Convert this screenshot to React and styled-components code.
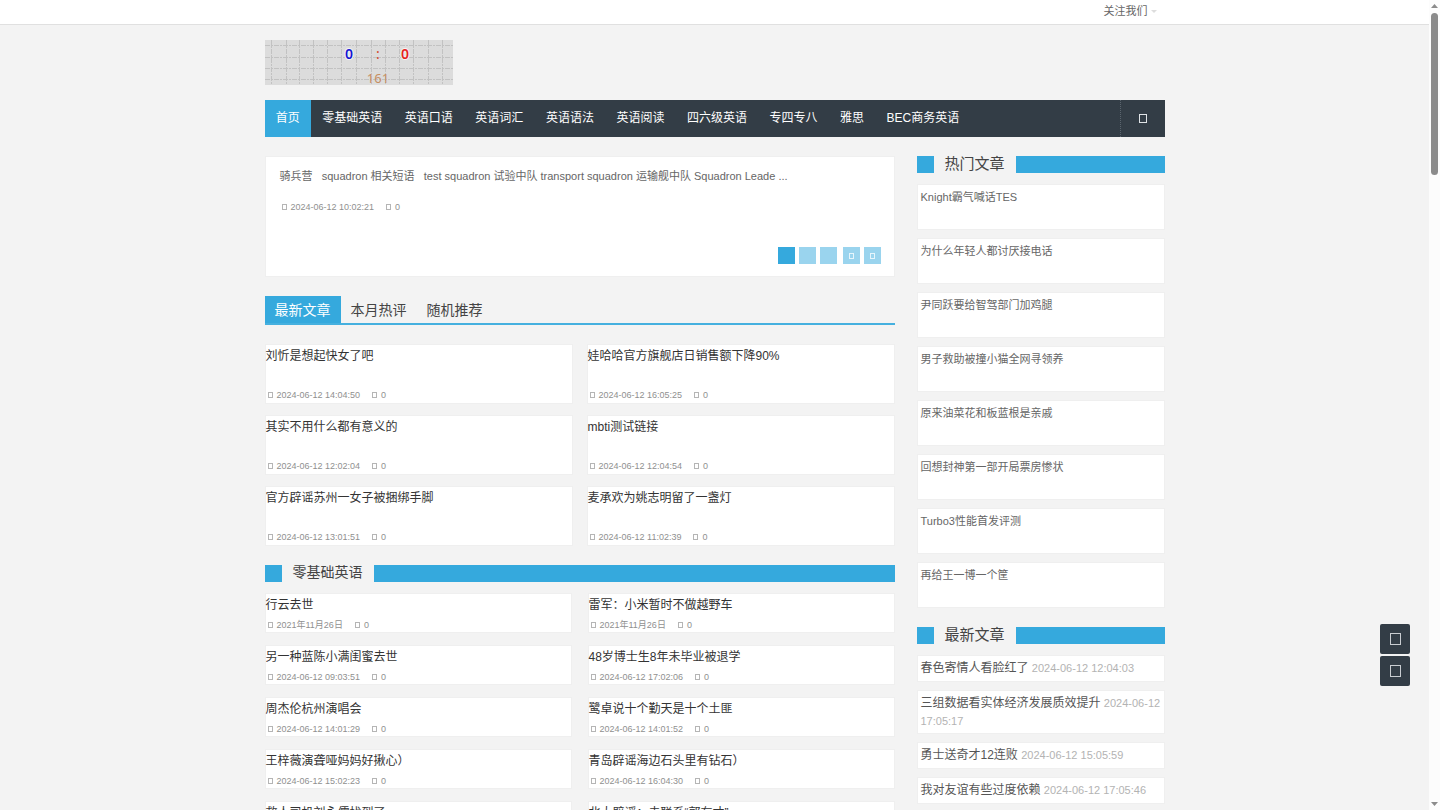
import styled, { createGlobalStyle } from "styled-components";

const navItems = [
  "首页",
  "零基础英语",
  "英语口语",
  "英语词汇",
  "英语语法",
  "英语阅读",
  "四六级英语",
  "专四专八",
  "雅思",
  "BEC商务英语",
];

const tabs = ["最新文章", "本月热评", "随机推荐"];

const latest = [
  { title: "刘忻是想起快女了吧", date: "2024-06-12 14:04:50" },
  { title: "娃哈哈官方旗舰店日销售额下降90%", date: "2024-06-12 16:05:25" },
  { title: "其实不用什么都有意义的", date: "2024-06-12 12:02:04" },
  { title: "mbti测试链接", date: "2024-06-12 12:04:54" },
  { title: "官方辟谣苏州一女子被捆绑手脚", date: "2024-06-12 13:01:51" },
  { title: "麦承欢为姚志明留了一盏灯", date: "2024-06-12 11:02:39" },
];

const basics = [
  { title: "行云去世", date: "2021年11月26日" },
  { title: "雷军：小米暂时不做越野车", date: "2021年11月26日" },
  { title: "另一种蓝陈小满闺蜜去世", date: "2024-06-12 09:03:51" },
  { title: "48岁博士生8年未毕业被退学", date: "2024-06-12 17:02:06" },
  { title: "周杰伦杭州演唱会", date: "2024-06-12 14:01:29" },
  { title: "鹭卓说十个勤天是十个土匪", date: "2024-06-12 14:01:52" },
  { title: "王梓薇演聋哑妈妈好揪心）", date: "2024-06-12 15:02:23" },
  { title: "青岛辟谣海边石头里有钻石）", date: "2024-06-12 16:04:30" },
  { title: "救人司机刘永儒找到了", date: "2024-06-12 10:03:12" },
  { title: "北大辟谣：未联系“郭有才”", date: "2024-06-12 15:01:47" },
];

const hot = [
  "Knight霸气喊话TES",
  "为什么年轻人都讨厌接电话",
  "尹同跃要给智驾部门加鸡腿",
  "男子救助被撞小猫全网寻领养",
  "原来油菜花和板蓝根是亲戚",
  "回想封神第一部开局票房惨状",
  "Turbo3性能首发评测",
  "再给王一博一个筐",
];

const recent = [
  { title: "春色寄情人看脸红了", date: "2024-06-12 12:04:03" },
  { title: "三组数据看实体经济发展质效提升", date: "2024-06-12 17:05:17" },
  { title: "勇士送奇才12连败", date: "2024-06-12 15:05:59" },
  { title: "我对友谊有些过度依赖", date: "2024-06-12 17:05:46" },
];

const Meta = ({ date }) => (
  <MetaStyle>
    <Glyph />
    <span>{date}</span>
    <Glyph />
    <span>0</span>
  </MetaStyle>
);

const Logo = () => (
  <svg width="188" height="45" role="img" aria-label="0 : 0">
    <rect width="188" height="45" fill="#dcdcdc" />
    <g stroke="#c2c2c2" strokeDasharray="5 1 2 1">
      {[7, 22, 35, 49, 63, 77, 92, 107, 121, 135, 149, 164, 178].map((x) => (
        <line key={x} x1={x - 0.5} x2={x - 0.5} y1="0" y2="45" />
      ))}
      {[6, 18, 29, 40].map((y) => (
        <line key={y} x1="0" x2="188" y1={y - 0.5} y2={y - 0.5} />
      ))}
    </g>
    <g
      fontFamily="'Noto Sans', sans-serif"
      fontSize="14"
      textAnchor="middle"
      stroke="#f4f4f4"
      strokeWidth="2"
      paintOrder="stroke"
    >
      <text x="84" y="19" fill="#1414d2" fontWeight="600">
        0
      </text>
      <text x="113" y="19" fill="#d2492a" stroke="none">
        :
      </text>
      <text x="140" y="19" fill="#e62222" fontWeight="600">
        0
      </text>
      <text x="113" y="43" fill="#c68f63" fontSize="13" stroke="none">
        161
      </text>
    </g>
  </svg>
);

const App = () => {
  return (
    <Page>
      <GlobalStyle />
      <Screen>
        <TopBar>
          <Container>
            <Follow href="#follow">
              关注我们
              <Caret />
            </Follow>
          </Container>
        </TopBar>

        <Container>
          <LogoLink href="#home">
            <Logo />
          </LogoLink>

          <Nav>
            <NavList>
              {navItems.map((item, i) => (
                <NavLink key={item} href="#nav" $active={i === 0}>
                  {item}
                </NavLink>
              ))}
            </NavList>
            <SearchButton aria-label="搜索">
              <Glyph $size="large" />
            </SearchButton>
          </Nav>

          <Columns>
            <main>
              <Slide>
                <SlideText>
                  {"骑兵营\u00a0\u00a0 squadron 相关短语\u00a0\u00a0 test squadron 试验中队 transport squadron 运输舰中队 Squadron Leade ..."}
                </SlideText>
                <Meta date="2024-06-12 10:02:21" />
                <Pager>
                  <PagerGroup>
                    <PagerButton aria-label="1" $active />
                    <PagerButton aria-label="2" />
                    <PagerButton aria-label="3" />
                  </PagerGroup>
                  <PagerGroup>
                    <PagerButton aria-label="上一页">
                      <Glyph />
                    </PagerButton>
                    <PagerButton aria-label="下一页">
                      <Glyph />
                    </PagerButton>
                  </PagerGroup>
                </Pager>
              </Slide>

              <TabBar>
                {tabs.map((tab, i) => (
                  <Tab key={tab} $active={i === 0}>
                    {tab}
                  </Tab>
                ))}
              </TabBar>
              <TallGrid>
                {latest.map((post) => (
                  <Card key={post.title}>
                    <CardTitle href="#post">{post.title}</CardTitle>
                    <Meta date={post.date} />
                  </Card>
                ))}
              </TallGrid>

              <Heading>零基础英语</Heading>
              <ShortGrid>
                {basics.map((post) => (
                  <Card key={post.title}>
                    <CardTitle href="#post">{post.title}</CardTitle>
                    <Meta date={post.date} />
                  </Card>
                ))}
              </ShortGrid>
            </main>

            <aside>
              <Heading $large>热门文章</Heading>
              <SideList>
                {hot.map((title) => (
                  <HotItem key={title}>
                    <a href="#post">{title}</a>
                  </HotItem>
                ))}
              </SideList>

              <Heading $large>最新文章</Heading>
              <SideList>
                {recent.map((post) => (
                  <RecentItem key={post.title}>
                    <a href="#post">{post.title}</a> <time>{post.date}</time>
                  </RecentItem>
                ))}
              </SideList>
            </aside>
          </Columns>
        </Container>
      </Screen>

      <ScrollBar aria-hidden="true">
        <Arrow width="7" height="4" viewBox="0 0 7 4">
          <path d="M3.5 0 7 4H0z" />
        </Arrow>
        <Thumb />
        <Arrow width="7" height="4" viewBox="0 0 7 4">
          <path d="M0 0h7L3.5 4z" />
        </Arrow>
      </ScrollBar>

      <Floating>
        <FloatButton aria-label="评论">
          <Glyph $size="huge" />
        </FloatButton>
        <FloatButton aria-label="返回顶部">
          <Glyph $size="huge" />
        </FloatButton>
      </Floating>
    </Page>
  );
};

const GlobalStyle = createGlobalStyle`
  * {
    box-sizing: border-box;
  }

  body {
    margin: 0;
    background: #f3f3f3;
    color: #555;
    font-family: "Liberation Sans", "Noto Sans CJK SC", sans-serif;
    font-size: 11px;
    line-height: 18px;
  }

  a {
    color: inherit;
    text-decoration: none;
  }

  button {
    padding: 0;
    border: 0;
    font: inherit;
    color: inherit;
    cursor: pointer;
  }
`;

const Page = styled.div`
  display: flex;
  height: 100vh;
`;

const Screen = styled.div`
  flex: 1;
  overflow: hidden;
`;

const Container = styled.div`
  width: 100%;
  max-width: 900px;
  margin: 0 auto;
`;

const TopBar = styled.header`
  height: 25px;
  padding-top: 2px;
  background: #fff;
  border-bottom: 1px solid #e0e0e0;
`;

const Follow = styled.a`
  display: flex;
  justify-content: flex-end;
  align-items: center;
  gap: 3px;
  padding-right: 8px;
  color: #666;
`;

const Caret = styled.span`
  border: 3px solid transparent;
  border-top-color: #ddd;
  border-bottom: 0;
`;

const LogoLink = styled.a`
  display: flex;
  margin: 15px 0;
`;

const Nav = styled.nav`
  display: flex;
  justify-content: space-between;
  height: 37px;
  background: #333d46;
`;

const NavList = styled.div`
  display: flex;
  flex: 0 1 706px;
`;

const NavLink = styled.a`
  flex: 1 1 auto;
  padding: 0 10px;
  background: ${({ $active }) => ($active ? "#35a9dd" : "transparent")};
  color: #fff;
  font-size: 12px;
  line-height: 37px;
  text-align: center;
  white-space: nowrap;
`;

const SearchButton = styled.button`
  display: flex;
  align-items: center;
  justify-content: center;
  width: 45px;
  background: transparent;
  border-left: 1px dotted #5b656e;
  color: #dfe3e6;
`;

const glyphSizes = {
  small: "5px",
  large: "8px",
  huge: "11px",
};

const Glyph = styled.i`
  display: inline-block;
  width: ${({ $size = "small" }) => glyphSizes[$size]};
  height: calc(${({ $size = "small" }) => glyphSizes[$size]} + 1px);
  border: 1px solid currentColor;
`;

const Columns = styled.div`
  display: grid;
  grid-template-columns: minmax(0, 1fr) 248px;
  gap: 22px;
  padding-top: 19px;
`;

const Panel = styled.div`
  background: #fff;
  border: 1px solid #efefef;
`;

const Slide = styled(Panel)`
  display: flex;
  flex-direction: column;
  height: 121px;
  padding: 10px 13px 12px 14px;
`;

const SlideText = styled.p`
  margin: 0 0 14px;
  color: #666;
`;

const MetaStyle = styled.div`
  display: flex;
  align-items: center;
  gap: 4px;
  padding-left: 2px;
  color: #909090;
  font-size: 9px;
  line-height: 16px;

  ${Glyph} {
    border-color: #b5b5b5;
  }

  span + ${Glyph} {
    margin-left: 8px;
  }
`;

const Pager = styled.div`
  display: flex;
  justify-content: flex-end;
  gap: 6px;
  margin-top: auto;
`;

const PagerGroup = styled.div`
  display: flex;
  gap: 4px;
`;

const PagerButton = styled.button`
  display: flex;
  align-items: center;
  justify-content: center;
  width: 17px;
  height: 17px;
  background: ${({ $active }) => ($active ? "#35a9dd" : "#9ad4ee")};
  color: #e6f5fc;
`;

const TabBar = styled.div`
  display: flex;
  margin: 19px 0;
  border-bottom: 2px solid #45b0df;
`;

const Tab = styled.button`
  height: 27px;
  padding: 0 10px;
  background: ${({ $active }) => ($active ? "#35a9dd" : "transparent")};
  color: ${({ $active }) => ($active ? "#fff" : "#444")};
  font-size: 14px;
  line-height: 26px;
`;

const Grid = styled.div`
  display: grid;
  grid-template-columns: 1fr 1fr;
`;

const Card = styled(Panel)`
  display: flex;
  flex-direction: column;
  justify-content: space-between;
`;

const CardTitle = styled.a`
  color: #333;
  font-size: 12px;
  line-height: 23px;
`;

const TallGrid = styled(Grid)`
  gap: 11px 14px;
  margin-bottom: 19px;

  ${Card} {
    height: 60px;
  }
`;

const ShortGrid = styled(Grid)`
  gap: 12px 16px;

  ${Card} {
    height: 40px;
  }
`;

const Heading = styled.h2`
  display: flex;
  gap: 11px;
  height: 17px;
  margin: 0 0 11px;
  color: #444;
  font-size: ${({ $large }) => ($large ? "15px" : "14px")};
  font-weight: 400;
  line-height: 15px;

  &::before,
  &::after {
    content: "";
    background: #35a9dd;
  }

  &::before {
    width: 17px;
  }

  &::after {
    flex: 1;
  }
`;

const SideList = styled.div`
  display: flex;
  flex-direction: column;
  gap: 8px;
  margin-bottom: 19px;
`;

const HotItem = styled(Panel)`
  height: 46px;
  padding: 3px;
  color: #666;
`;

const RecentItem = styled(Panel)`
  min-height: 27px;
  padding: 3px 1px 3px 3px;
  color: #555;
  font-size: 12px;

  time {
    color: #b3b3b3;
    font-size: 11px;
  }
`;

const ScrollBar = styled.div`
  display: flex;
  flex-direction: column;
  align-items: center;
  width: 11px;
  padding: 4px 0;
  background: #fcfcfc;
`;

const Arrow = styled.svg`
  fill: #8b8b8b;

  &:last-child {
    margin-top: auto;
  }
`;

const Thumb = styled.div`
  width: 7px;
  height: 20vh;
  margin-top: 5px;
  background: #8b8b8b;
  border-radius: 4px;
`;

const Floating = styled.div`
  position: fixed;
  right: 30px;
  bottom: 124px;
  display: flex;
  flex-direction: column;
  gap: 2px;
`;

const FloatButton = styled.button`
  display: flex;
  align-items: center;
  justify-content: center;
  width: 30px;
  height: 30px;
  background: #333d46;
  border-radius: 2px;
  color: #c9cdd1;
`;

export default App;
